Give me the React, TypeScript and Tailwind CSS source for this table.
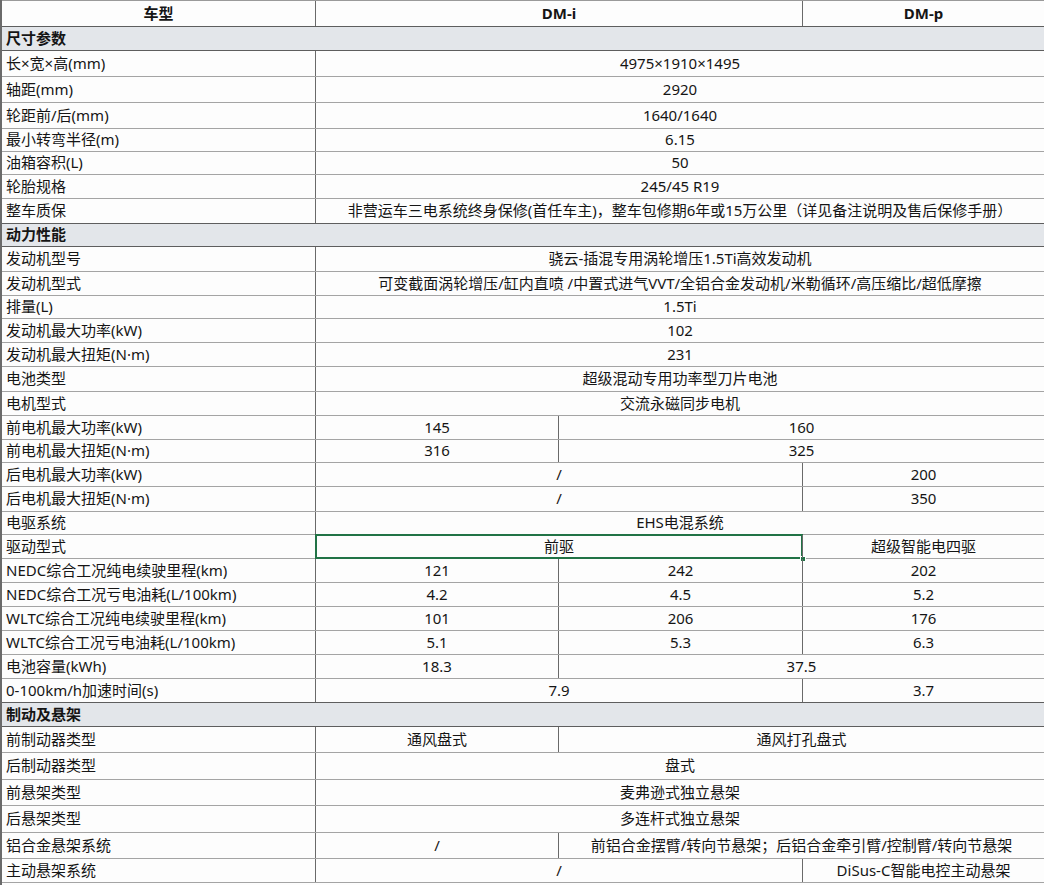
import React from "react";

type Cell = { span: number; text: string; align?: "left" | "center"; bold?: boolean; selected?: boolean };
type Row = { h: number; kind?: "header" | "section"; cells: Cell[] };

const H: Record<number, string> = {
  23: "h-[23px]",
  24: "h-[24px]",
  25: "h-[25px]",
  26: "h-[26px]",
  27: "h-[27px]",
};

const SPAN: Record<number, string> = {
  1: "col-span-1",
  2: "col-span-2",
  3: "col-span-3",
  4: "col-span-4",
};

const L = (t: string): Cell => ({ span: 1, text: t, align: "left" });
const C = (span: number, t: string, extra: Partial<Cell> = {}): Cell => ({ span, text: t, align: "center", ...extra });
const sec = (h: number, t: string): Row => ({ h, kind: "section", cells: [{ span: 4, text: t, align: "left", bold: true }] });
const all = (h: number, label: string, v: string): Row => ({ h, cells: [L(label), C(3, v)] });

const rows: Row[] = [
  { h: 27, kind: "header", cells: [C(1, "车型", { bold: true }), C(2, "DM-i", { bold: true }), C(1, "DM-p", { bold: true })] },
  sec(24, "尺寸参数"),
  all(26, "长×宽×高(mm)", "4975×1910×1495"),
  all(26, "轴距(mm)", "2920"),
  all(26, "轮距前/后(mm)", "1640/1640"),
  all(23, "最小转弯半径(m)", "6.15"),
  all(23, "油箱容积(L)", "50"),
  all(24, "轮胎规格", "245/45 R19"),
  all(25, "整车质保", "非营运车三电系统终身保修(首任车主)，整车包修期6年或15万公里（详见备注说明及售后保修手册）"),
  sec(23, "动力性能"),
  all(25, "发动机型号", "骁云-插混专用涡轮增压1.5Ti高效发动机"),
  all(24, "发动机型式", "可变截面涡轮增压/缸内直喷 /中置式进气VVT/全铝合金发动机/米勒循环/高压缩比/超低摩擦"),
  all(23, "排量(L)", "1.5Ti"),
  all(24, "发动机最大功率(kW)", "102"),
  all(24, "发动机最大扭矩(N·m)", "231"),
  all(25, "电池类型", "超级混动专用功率型刀片电池"),
  all(24, "电机型式", "交流永磁同步电机"),
  { h: 24, cells: [L("前电机最大功率(kW)"), C(1, "145"), C(2, "160")] },
  { h: 23, cells: [L("前电机最大扭矩(N·m)"), C(1, "316"), C(2, "325")] },
  { h: 24, cells: [L("后电机最大功率(kW)"), C(2, "/"), C(1, "200")] },
  { h: 25, cells: [L("后电机最大扭矩(N·m)"), C(2, "/"), C(1, "350")] },
  all(23, "电驱系统", "EHS电混系统"),
  { h: 24, cells: [L("驱动型式"), C(2, "前驱", { selected: true }), C(1, "超级智能电四驱")] },
  { h: 24, cells: [L("NEDC综合工况纯电续驶里程(km)"), C(1, "121"), C(1, "242"), C(1, "202")] },
  { h: 24, cells: [L("NEDC综合工况亏电油耗(L/100km)"), C(1, "4.2"), C(1, "4.5"), C(1, "5.2")] },
  { h: 24, cells: [L("WLTC综合工况纯电续驶里程(km)"), C(1, "101"), C(1, "206"), C(1, "176")] },
  { h: 24, cells: [L("WLTC综合工况亏电油耗(L/100km)"), C(1, "5.1"), C(1, "5.3"), C(1, "6.3")] },
  { h: 24, cells: [L("电池容量(kWh)"), C(1, "18.3"), C(2, "37.5")] },
  { h: 24, cells: [L("0-100km/h加速时间(s)"), C(2, "7.9"), C(1, "3.7")] },
  sec(24, "制动及悬架"),
  { h: 26, cells: [L("前制动器类型"), C(1, "通风盘式"), C(2, "通风打孔盘式")] },
  all(27, "后制动器类型", "盘式"),
  all(26, "前悬架类型", "麦弗逊式独立悬架"),
  all(27, "后悬架类型", "多连杆式独立悬架"),
  { h: 26, cells: [L("铝合金悬架系统"), C(1, "/"), C(2, "前铝合金摆臂/转向节悬架；后铝合金牵引臂/控制臂/转向节悬架")] },
  { h: 24, cells: [L("主动悬架系统"), C(2, "/"), C(1, "DiSus-C智能电控主动悬架")] },
];

export default function App() {
  return (
    <div
      className="w-[1044px] h-[885px] overflow-hidden bg-[#fdfdfd] text-[#151515] text-[15px] leading-none border-l-2 border-[#6a6a6a]"
      style={{ fontFamily: '"Noto Sans", "Noto Sans CJK SC", sans-serif' }}
    >
      {rows.map((r, i) => {
        const next = rows[i + 1];
        const darkBottom = r.kind === "section" || next?.kind === "section" || r.kind === "header";
        const rowBg = r.kind === "section" ? "bg-[#e3e6ea]" : "";
        const bottom = darkBottom ? "border-b border-[#5e5e5e]" : "border-b border-[#a4a4a4]";
        const top = r.kind === "header" ? "border-t border-t-[#9a9a9a]" : "";
        let col = 0;
        return (
          <div key={i} className={`grid grid-cols-[313px_243px_244px_242px] box-border ${H[r.h]} ${rowBg} ${bottom} ${top}`}>
            {r.cells.map((c, j) => {
              const first = col === 0;
              col += c.span;
              const left = !first && r.kind !== "section" ? "border-l border-[#6a6a6a]" : "";
              const align = c.align === "left" ? "justify-start pl-[4px]" : "justify-center";
              return (
                <div
                  key={j}
                  className={`relative flex items-center whitespace-nowrap ${SPAN[c.span]} ${left} ${align} ${c.bold ? "font-bold" : ""}`}
                >
                  <span className="pb-[1px]">{c.text}</span>
                  {c.selected && (
                    <>
                      <div className="absolute -left-px -top-px -right-px -bottom-px border-2 border-[#217346] pointer-events-none" />
                      <div className="absolute right-[-4px] bottom-[-4px] w-[6px] h-[6px] bg-[#217346] border border-white" />
                    </>
                  )}
                </div>
              );
            })}
          </div>
        );
      })}
    </div>
  );
}
